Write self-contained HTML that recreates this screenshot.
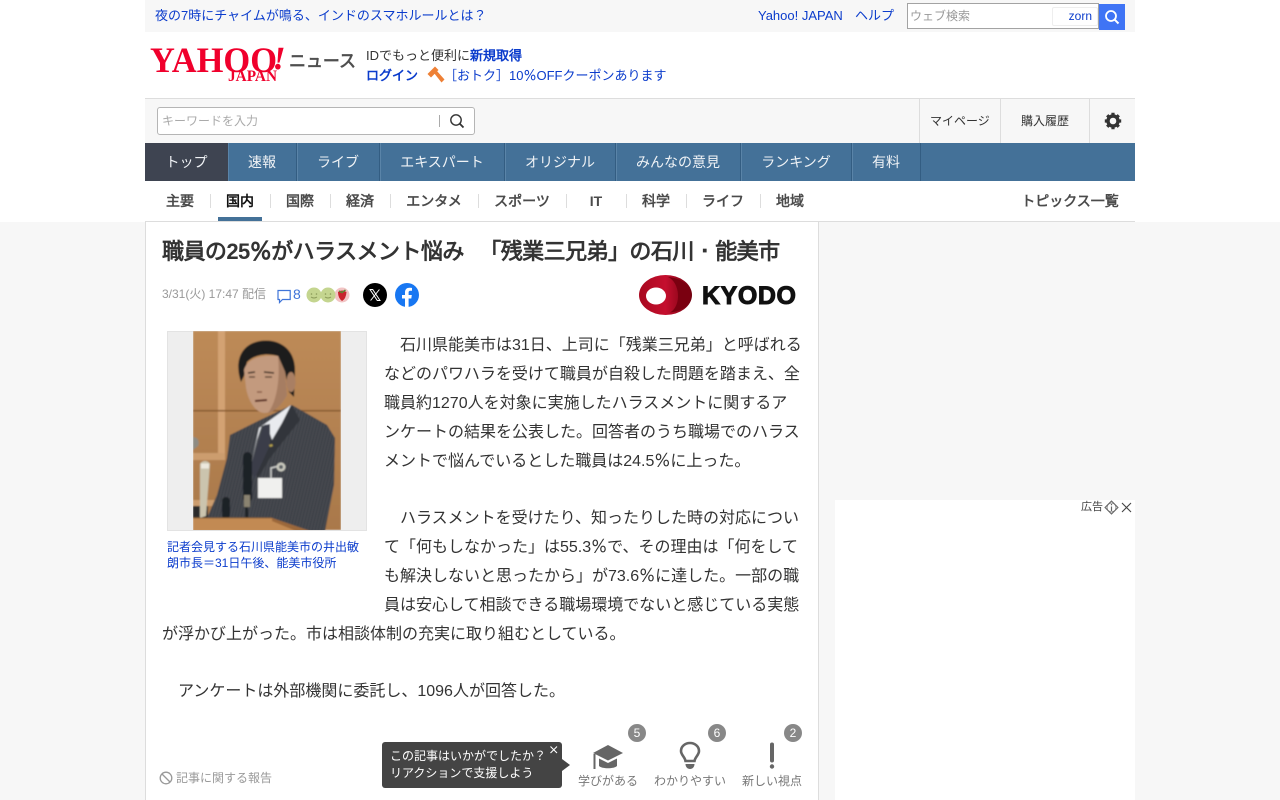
<!DOCTYPE html>
<html lang="ja"><head><meta charset="utf-8"><title>職員の25％がハラスメント悩み</title>
<style>
*{box-sizing:border-box}
html,body{margin:0;padding:0;width:1280px;height:800px;overflow:hidden;background:#fff}
body{position:relative;font-family:"Liberation Sans","WenQuanYi Zen Hei",sans-serif;color:#333}
.a{position:absolute;white-space:nowrap}
.l{color:#0b3ccc}
.i{font-family:"IPAGothic",sans-serif;line-height:0}
.n{position:absolute;top:143px;height:38px;line-height:38px;text-align:center;color:#f0f3f6;font-size:14px;border-right:1px solid #335d82;box-shadow:1px 0 0 #5a84a8 inset}
.s{position:absolute;top:181px;height:40px;line-height:40px;text-align:center;font-size:14px;font-weight:bold;color:#4b4b4b}
.sep{position:absolute;top:194px;width:1px;height:14px;background:#ddd}
.b{position:absolute;left:162px;font-size:16px;line-height:29px;height:29px;color:#333;white-space:nowrap}
.badge{position:absolute;top:724px;width:18px;height:18px;border-radius:50%;background:#888;color:#fff;font-size:12px;line-height:18px;text-align:center}
.rl{position:absolute;top:773px;font-size:12px;line-height:16px;color:#777;white-space:nowrap}
</style></head><body>
<div class="a" style="left:0;top:222px;width:1280px;height:578px;background:#f7f7f7"></div>
<div class="a" style="left:145px;top:0;width:990px;height:32px;background:#f7f7f7"></div>
<div class="a l" style="left:155px;top:7px;font-size:13px;line-height:17px">夜の7時にチャイムが鳴る、インドのスマホルールとは？</div>
<div class="a l" style="left:758px;top:7px;font-size:13px;line-height:17px">Yahoo! JAPAN</div>
<div class="a l" style="left:855px;top:7px;font-size:13px;line-height:17px">ヘルプ</div>
<div class="a" style="left:907px;top:3px;width:192px;height:26px;background:#fff;border:1px solid #a3a3a3"></div>
<div class="a" style="left:910px;top:8px;font-size:12px;line-height:16px;color:#999">ウェブ検索</div>
<div class="a" style="left:1052px;top:7px;width:46px;height:19px;border:1px solid #eee;border-radius:2px;background:#fff;text-align:right;padding-right:5px;font-size:12px;line-height:16px;color:#0b3ccc">zorn</div>
<div class="a" style="left:1099px;top:4px;width:26px;height:26px;background:#3f74f5"></div>
<svg class="a" style="left:1099px;top:4px" width="26" height="26" viewBox="0 0 26 26"><circle cx="12" cy="12" r="5" fill="none" stroke="#fff" stroke-width="1.8"/><path d="M15.6 15.6L19.5 19.5" stroke="#fff" stroke-width="2"/></svg>

<svg class="a" style="left:148px;top:44px" width="212" height="40" viewBox="0 0 212 40">
<text x="2" y="28" font-family="'Liberation Serif',serif" font-weight="bold" font-size="36" fill="#f0002c" textLength="127" lengthAdjust="spacingAndGlyphs">YAHOO</text>
<text x="125" y="25" font-family="'Liberation Serif',serif" font-weight="bold" font-style="italic" font-size="32" fill="#f0002c" stroke="#f0002c" stroke-width=".6" textLength="12" lengthAdjust="spacingAndGlyphs">!</text>
<text x="80" y="37" font-family="'Liberation Serif',serif" font-weight="bold" font-size="16" fill="#f0002c" textLength="49" lengthAdjust="spacingAndGlyphs">JAPAN</text>
<text x="141" y="23" font-family="'Liberation Sans','WenQuanYi Zen Hei',sans-serif" font-weight="bold" font-size="17.5" fill="#4f4f4f" textLength="67" lengthAdjust="spacingAndGlyphs">ニュース</text>
</svg>
<div class="a" style="left:366px;top:47px;font-size:13px;line-height:18px;color:#333">IDでもっと便利に<b class="l">新規取得</b></div>
<div class="a l" style="left:366px;top:67px;font-size:13px;line-height:18px;font-weight:bold">ログイン</div>
<svg class="a" style="left:426px;top:65px" width="20" height="20" viewBox="0 0 20 20"><path d="M1.500 9L9 1.500L12.500 5L5 12.500Z" fill="#ee8035"/><path d="M8 8L10.500 5.500L18.500 14.500L15.500 17.500Z" fill="#ee8035"/></svg>
<div class="a l" style="left:444px;top:67px;font-size:13px;line-height:18px">［おトク］10<span class="i">％</span>OFFクーポンあります</div>

<div class="a" style="left:145px;top:98px;width:990px;height:45px;background:#f7f7f7;border-top:1px solid #ddd"></div>
<div class="a" style="left:157px;top:107px;width:318px;height:28px;background:#fff;border:1px solid #b5b5b5;border-radius:3px"></div>
<div class="a" style="left:162px;top:113px;font-size:12px;line-height:16px;color:#aaa">キーワードを入力</div>
<div class="a" style="left:439px;top:115px;width:1px;height:12px;background:#aaa"></div>
<svg class="a" style="left:448px;top:112px" width="18" height="18" viewBox="0 0 18 18"><circle cx="8" cy="8" r="5.2" fill="none" stroke="#333" stroke-width="1.4"/><path d="M11.8 11.8L15.5 15.5" stroke="#333" stroke-width="1.8"/></svg>
<div class="a" style="left:919px;top:99px;width:1px;height:44px;background:#ddd"></div>
<div class="a" style="left:1000px;top:99px;width:1px;height:44px;background:#ddd"></div>
<div class="a" style="left:1089px;top:99px;width:1px;height:44px;background:#ddd"></div>
<div class="a" style="left:930px;top:113px;font-size:12px;line-height:16px;color:#333">マイページ</div>
<div class="a" style="left:1021px;top:113px;font-size:12px;line-height:16px;color:#333">購入履歴</div>
<svg class="a" style="left:1104px;top:112px" width="18" height="18" viewBox="0 0 18 18"><circle cx="9" cy="9" r="5" fill="none" stroke="#333" stroke-width="3.4"/><g stroke="#333" stroke-width="3.2"><path d="M9 .8V3.5M9 14.5V17.2M.8 9H3.5M14.5 9H17.2M3.2 3.2L5.1 5.1M12.9 12.9L14.8 14.8M3.2 14.8L5.1 12.9M12.9 5.1L14.8 3.2"/></g></svg>

<div class="a" style="left:145px;top:143px;width:990px;height:38px;background:#447198"></div>
<div class="n" style="left:145px;width:83px;background:#3e4451;box-shadow:none;border:0">トップ</div>
<div class="n" style="left:228px;width:69px">速報</div>
<div class="n" style="left:297px;width:83px">ライブ</div>
<div class="n" style="left:380px;width:125px">エキスパート</div>
<div class="n" style="left:505px;width:111px">オリジナル</div>
<div class="n" style="left:616px;width:125px">みんなの意見</div>
<div class="n" style="left:741px;width:111px">ランキング</div>
<div class="n" style="left:852px;width:69px">有料</div>

<div class="a" style="left:145px;top:221px;width:990px;height:1px;background:#ddd"></div>
<div class="s" style="left:150px;width:60px">主要</div><div class="sep" style="left:210px"></div>
<div class="s" style="left:210px;width:60px;color:#111">国内</div><div class="sep" style="left:270px"></div>
<div class="s" style="left:270px;width:60px">国際</div><div class="sep" style="left:330px"></div>
<div class="s" style="left:330px;width:60px">経済</div><div class="sep" style="left:390px"></div>
<div class="s" style="left:390px;width:88px">エンタメ</div><div class="sep" style="left:478px"></div>
<div class="s" style="left:478px;width:88px">スポーツ</div><div class="sep" style="left:566px"></div>
<div class="s" style="left:566px;width:60px">IT</div><div class="sep" style="left:626px"></div>
<div class="s" style="left:626px;width:60px">科学</div><div class="sep" style="left:686px"></div>
<div class="s" style="left:686px;width:74px">ライフ</div><div class="sep" style="left:760px"></div>
<div class="s" style="left:760px;width:60px">地域</div>
<div class="s" style="left:1021px;width:98px">トピックス一覧</div>
<div class="a" style="left:218px;top:217px;width:44px;height:4px;background:#447198"></div>

<div class="a" style="left:145px;top:222px;width:674px;height:578px;background:#fff;border-left:1px solid #ddd;border-right:1px solid #ddd"></div>
<div class="a" style="left:162px;top:236px;font-size:22px;line-height:32px;font-weight:bold;color:#333;letter-spacing:-.55px">職員の25<span class="i">％</span>がハラスメント悩み<span class="i" style="margin-right:5px">　</span>「残業三兄弟」の石川<span class="i">・</span>能美市</div>
<div class="a" style="left:162px;top:286px;font-size:12px;line-height:16px;color:#999">3/31(火) 17:47 配信</div>
<svg class="a" style="left:276px;top:288px" width="16" height="16" viewBox="0 0 16 16"><path d="M2 2.5H14.2V11.5H6.5L3.5 14.5V11.5H2Z" fill="none" stroke="#3f74d8" stroke-width="1.2"/></svg>
<div class="a" style="left:293px;top:285px;font-size:14px;line-height:18px;color:#3f74d8">8</div>
<svg class="a" style="left:305px;top:286px" width="46" height="18" viewBox="0 0 46 18">
<circle cx="9" cy="9" r="7.5" fill="#c4d58f"/><circle cx="6.5" cy="8" r=".8" fill="#8a9a58"/><circle cx="11.5" cy="8" r=".8" fill="#8a9a58"/><path d="M6 11Q9 13 12 11" stroke="#8a9a58" fill="none"/>
<circle cx="37" cy="9" r="7.5" fill="#f2c4c4"/><path d="M33 6Q37 3 41.500 6Q41 13 37 15Q33 12 33 6Z" fill="#c8232c"/><path d="M34 5L37 6.500L40.500 4" stroke="#5a8a35" stroke-width="1.500" fill="none"/>
<circle cx="23" cy="9" r="7.500" fill="#c4d58f"/><circle cx="20.500" cy="8" r=".8" fill="#8a9a58"/><circle cx="25.500" cy="8" r=".8" fill="#8a9a58"/><path d="M20 11Q23 13 26 11" stroke="#8a9a58" fill="none"/>
</svg>
<svg class="a" style="left:363px;top:283px" width="24" height="24" viewBox="0 0 24 24"><circle cx="12" cy="12" r="12" fill="#000"/><path d="M7 6.500H9.700L17 17.500H14.300ZM16.400 6.500L7.600 17.500" stroke="#fff" stroke-width="1" fill="none"/></svg>
<svg class="a" style="left:395px;top:283px" width="24" height="24" viewBox="0 0 24 24"><circle cx="12" cy="12" r="12" fill="#1877f2"/><path d="M10 24V15.500H7V12H10V9.300C10 6.300 11.800 4.700 14.500 4.700C15.800 4.700 17 4.900 17 4.900V7.800H15.500C14 7.800 13.600 8.700 13.600 9.600V12H16.800L16.300 15.500H13.600V24Z" fill="#fff"/></svg>
<svg class="a" style="left:638px;top:274px" width="160" height="42" viewBox="0 0 160 42">
<defs><linearGradient id="r" x1="0" x2="1"><stop offset="0" stop-color="#a8081f"/><stop offset=".5" stop-color="#c50f2e"/><stop offset="1" stop-color="#6e000e"/></linearGradient></defs>
<ellipse cx="27.500" cy="21" rx="26.500" ry="20" fill="url(#r)"/><path d="M30 3C42 8 44 32 32 38.500C48 37 53 28 53 21C53 12 44 4 30 3Z" fill="#7a0010"/><ellipse cx="18" cy="22" rx="10" ry="8.500" fill="#fff"/>
<text x="64" y="30" font-family="'Liberation Sans',sans-serif" font-weight="bold" font-size="25" fill="#111" stroke="#111" stroke-width="1" textLength="94" lengthAdjust="spacing">KYODO</text></svg>

<div class="a" style="left:167px;top:331px;width:200px;height:200px;background:#eee;border:1px solid #e3e3e3"></div>
<svg class="a" style="left:193px;top:331px" width="148" height="199" viewBox="193 331 148 199">
<defs><filter id="bl"><feGaussianBlur stdDeviation=".8"/></filter>
<pattern id="st" width="3" height="8" patternUnits="userSpaceOnUse" patternTransform="rotate(14)"><rect width="3" height="8" fill="#3d4046"/><rect width="1" height="8" fill="#4c4f55"/></pattern>
<linearGradient id="w" x1="0" x2="0" y1="0" y2="1"><stop offset="0" stop-color="#bd8a57"/><stop offset="1" stop-color="#a9784a"/></linearGradient></defs>
<g filter="url(#bl)">
<rect x="193" y="331" width="148" height="199" fill="url(#w)"/>
<rect x="218" y="331" width="7" height="128" fill="#d3a273"/>
<rect x="193" y="453" width="32" height="7" fill="#cc9d6e"/>
<rect x="193" y="500" width="32" height="6" fill="#cc9d6e"/>
<rect x="193" y="410" width="148" height="1.500" fill="#86592e"/>
<rect x="193" y="506" width="15" height="12" fill="#2b2b2c"/>
<path d="M207 518L217 495L227 458L230 435L260 420L292 405L327 425L335 438L334 485L325 531H207Z" fill="url(#st)"/>
<path d="M292 405L300 420L270 458L258 478L252 468L262 430Z" fill="#33353a"/>
<path d="M291 405L282 423L272 440L268 428L262 425L257 440L251 466L259 428Z" fill="#e9ebef"/>
<path d="M264 425L270 424L270 445L254 480L251 465L259 440Z" fill="#3b3d4a"/>
<path d="M241 382C235 365 238 345 260 341C280 338 296 350 295 372L294 397L289 392L285 372L278 356C268 353 255 354 247 362L244 376Z" fill="#1d1b1c"/>
<path d="M244 370C246 362 255 354 278 356L285 372L287 395C282 405 274 412 265 413C255 413 248 400 246 388Z" fill="#c39a7e"/>
<path d="M278 356L285 372L287 395C282 405 274 412 268 413C278 400 280 375 278 356Z" fill="#a67d62"/>
<ellipse cx="291" cy="382" rx="4.500" ry="10" fill="#a97f63"/>
<path d="M248 373L255 372M264 372L274 373" stroke="#3a2a20" stroke-width="1.500"/>
<path d="M249 377L255 377M265 377L272 377" stroke="#4b3429" stroke-width="1.300"/>
<path d="M257 392L262 392" stroke="#8a6048" stroke-width="1.500"/>
<path d="M255 401L267 400" stroke="#5a2e24" stroke-width="2"/>
<rect x="258" y="478" width="24" height="20" fill="#f0f0ee"/>
<path d="M271 478V468L279 466" stroke="#cfd0cd" stroke-width="1.500" fill="none"/>
<circle cx="281" cy="467" r="4.500" fill="#c9c9be"/>
<circle cx="281" cy="467" r="2" fill="#5c6066"/>
<path d="M269 445l3 -1l1 2l-3 1z" fill="#b6a24b"/>
<rect x="243" y="452" width="9" height="50" rx="4.500" fill="#1f2125"/>
<path d="M246 500L247 518" stroke="#1f2125" stroke-width="3"/>
<rect x="244" y="495" width="6" height="12" fill="#8a8371"/>
<path d="M200 464C202 460 208 460 210 464L206 516L200 518Z" fill="#cbc4ae"/>
<path d="M201 466L209 466" stroke="#ece8dd" stroke-width="5"/>
<path d="M193 437C198 437 200 442 198 446L193 450Z" fill="#8e8b82"/>
<rect x="222" y="497" width="8" height="22" rx="4" fill="#1f2125"/>
<path d="M193 518H272L310 531H193Z" fill="#c28a52"/>
<path d="M272 518L310 531H296L272 521Z" fill="#9b673a"/>
<path d="M193 518H272" stroke="#8a6238" stroke-width="1"/>
</g></svg>
<div class="a l" style="left:167px;top:539px;font-size:12px;line-height:16px">記者会見する石川県能美市の井出敏</div>
<div class="a l" style="left:167px;top:555px;font-size:12px;line-height:16px">朗市長＝31日午後、能美市役所</div>

<div class="b" style="left:384px;top:331px;padding-left:16px">石川県能美市は31日、上司に「残業三兄弟」と呼ばれる</div>
<div class="b" style="left:384px;top:360px">などのパワハラを受けて職員が自殺した問題を踏まえ、全</div>
<div class="b" style="left:384px;top:389px">職員約1270人を対象に実施したハラスメントに関するア</div>
<div class="b" style="left:384px;top:418px">ンケートの結果を公表した。回答者のうち職場でのハラス</div>
<div class="b" style="left:384px;top:447px">メントで悩んでいるとした職員は24.5<span class="i">％</span>に上った。</div>
<div class="b" style="left:384px;top:504px;padding-left:16px">ハラスメントを受けたり、知ったりした時の対応につい</div>
<div class="b" style="left:384px;top:533px">て「何もしなかった」は55.3<span class="i">％</span>で、その理由は「何をして</div>
<div class="b" style="left:384px;top:562px">も解決しないと思ったから」が73.6<span class="i">％</span>に達した。一部の職</div>
<div class="b" style="left:384px;top:591px">員は安心して相談できる職場環境でないと感じている実態</div>
<div class="b" style="top:620px">が浮かび上がった。市は相談体制の充実に取り組むとしている。</div>
<div class="b" style="top:677px;padding-left:16px">アンケートは外部機関に委託し、1096人が回答した。</div>

<svg class="a" style="left:159px;top:771px" width="14" height="14" viewBox="0 0 14 14"><circle cx="7" cy="7" r="5.800" fill="none" stroke="#999" stroke-width="1.300"/><path d="M3 3L11 11" stroke="#999" stroke-width="1.300"/></svg>
<div class="a" style="left:176px;top:770px;font-size:12px;line-height:16px;color:#999">記事に関する報告</div>

<div class="a" style="left:382px;top:742px;width:180px;height:46px;background:#444;border-radius:3px"></div>
<div class="a" style="left:562px;top:759px;width:0;height:0;border-left:8px solid #444;border-top:6px solid transparent;border-bottom:6px solid transparent"></div>
<div class="a" style="left:390px;top:748px;font-size:12px;line-height:17px;color:#fff">この記事はいかがでしたか？<br>リアクションで支援しよう</div>
<svg class="a" style="left:549px;top:745px" width="10" height="10" viewBox="0 0 10 10"><path d="M1.500 1.500L8 8M8 1.500L1.500 8" stroke="#fff" stroke-width="1.100"/></svg>

<div class="badge" style="left:628px">5</div><div class="badge" style="left:708px">6</div><div class="badge" style="left:784px">2</div>
<svg class="a" style="left:592px;top:744px" width="32" height="28" viewBox="0 0 32 28"><path d="M16 1L31 9L16 16.500L1 9Z" fill="#666"/><path d="M7 14.500L16 19L25 14.500V22C22 25 10 25 7 22Z" fill="#666"/><rect x="1.500" y="10" width="2" height="15" fill="#666"/></svg>
<svg class="a" style="left:678px;top:741px" width="24" height="30" viewBox="0 0 24 30"><path d="M7.500 20C7 16 3 14 3 10C3 5.500 7 2 12 2C17 2 21 5.500 21 10C21 14 17 16 16.500 20Z" fill="none" stroke="#666" stroke-width="2.600"/><path d="M7.500 23H16.500C16.500 26 14.500 28 12 28C9.500 28 7.500 26 7.500 23Z" fill="#666"/></svg>
<svg class="a" style="left:764px;top:741px" width="16" height="30" viewBox="0 0 16 30"><rect x="6" y="1.500" width="4" height="20" rx="2" fill="#666"/><circle cx="8" cy="25.500" r="2.200" fill="#666"/></svg>
<div class="rl" style="left:578px">学びがある</div>
<div class="rl" style="left:654px">わかりやすい</div>
<div class="rl" style="left:742px">新しい視点</div>

<div class="a" style="left:835px;top:500px;width:300px;height:300px;background:#fff"></div>
<div class="a" style="left:1081px;top:500px;font-size:11px;line-height:15px;color:#444">広告</div>
<svg class="a" style="left:1104px;top:500px" width="15" height="15" viewBox="0 0 15 15"><path d="M7.500 1L14 7.500L7.500 14L1 7.500Z" fill="none" stroke="#666"/><circle cx="7.500" cy="7.500" r="4.500" fill="none" stroke="#666" stroke-width=".8"/><path d="M7.500 6.500V11M7.500 4V5.300" stroke="#666" stroke-width="1.200"/></svg>
<svg class="a" style="left:1120px;top:501px" width="13" height="13" viewBox="0 0 13 13"><path d="M2 2L11 11M11 2L2 11" stroke="#444" stroke-width="1.100"/></svg>
</body></html>
